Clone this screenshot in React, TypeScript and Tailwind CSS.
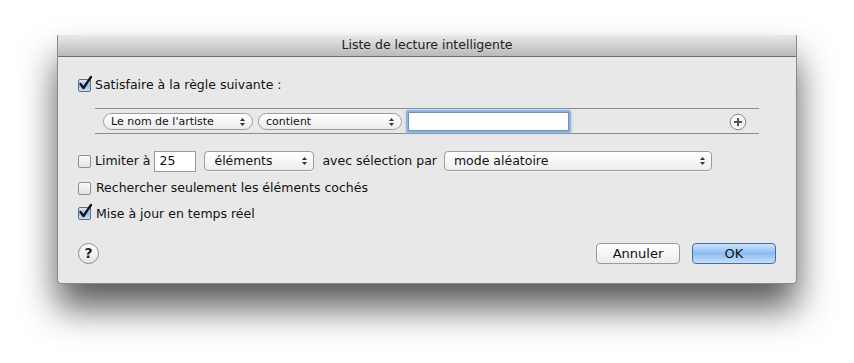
import React from "react";

const font = { fontFamily: '"DejaVu Sans", "Liberation Sans", sans-serif' };

const Arrows = () => (
  <svg width="7" height="10" viewBox="0 0 7 10" className="shrink-0">
    <path d="M3.5 1 L6 4 H1 Z" fill="#333" />
    <path d="M3.5 9 L6 6 H1 Z" fill="#333" />
  </svg>
);

const CheckBox = ({ checked }: { checked?: boolean }) => (
  <div className="relative w-[13px] h-[13px] shrink-0">
    <div
      className={`w-[13px] h-[13px] rounded-[2px] border ${
        checked
          ? "border-[#5a6f8c] bg-gradient-to-b from-[#d7e6f7] via-[#9dc0ea] to-[#c9def5]"
          : "border-[#8e8e8e] bg-gradient-to-b from-[#fafafa] to-[#e3e3e3]"
      }`}
    />
    {checked && (
      <svg
        width="16"
        height="16"
        viewBox="0 0 16 16"
        className="absolute -top-[4px] left-0"
      >
        <path
          d="M2.5 9 L5.5 13 L13 2"
          fill="none"
          stroke="#111"
          strokeWidth="2.3"
          strokeLinecap="round"
          strokeLinejoin="round"
        />
      </svg>
    )}
  </div>
);

const Popup = ({ label, w }: { label: string; w: string }) => (
  <div
    className={`${w} h-[20px] flex items-center justify-between pl-[9px] pr-[5px] rounded-[4px] border border-[#9d9d9d] bg-gradient-to-b from-white to-[#eeeeee] shadow-[0_1px_0_rgba(255,255,255,0.6)] text-[12.5px] text-[#111]`}
  >
    <span>{label}</span>
    <Arrows />
  </div>
);

const SmallPopup = ({ label, w }: { label: string; w: string }) => (
  <div
    className={`${w} h-[17px] flex items-center justify-between pl-[7px] pr-[6px] rounded-full border border-[#9d9d9d] bg-gradient-to-b from-white to-[#ececec] text-[11px] text-[#111]`}
  >
    <span>{label}</span>
    <Arrows />
  </div>
);

const App = () => {
  return (
    <div className="w-[854px] h-[363px] bg-white overflow-hidden pl-[57px] pt-[35px]" style={font}>
      <div className="w-[740px] h-[249px] flex flex-col bg-[#e8e8e8] border-x border-b border-[#8a8a8a] rounded-b-[4px] shadow-[0_24px_36px_rgba(0,0,0,0.65)]">
        <div className="h-[22px] shrink-0 flex items-center justify-center border-b border-[#6e6e6e] bg-gradient-to-b from-[#e9e9e9] to-[#b9b9b9] text-[12.5px] text-[#222]">
          Liste de lecture intelligente
        </div>

        <div className="flex-1 flex flex-col px-[20px] text-[12.5px] text-[#111]">
          <div className="mt-[19px] flex items-center gap-[4px]">
            <CheckBox checked />
            <span>Satisfaire à la règle suivante :</span>
          </div>

          <div className="mt-[13px] ml-[17px] mr-[17px] h-[26px] flex items-center gap-[5px] pl-[8px] pr-[12px] pt-[2px] border-y border-[#8c8c8c]">
            <SmallPopup label="Le nom de l'artiste" w="w-[150px]" />
            <SmallPopup label="contient" w="w-[144px]" />
            <div className="ml-[1px] w-[161px] h-[19px] bg-white border border-[#6d8fb8] rounded-[1px] shadow-[0_0_0_2px_#8fb4e0,0_0_3px_2px_#9fc1ea]" />
            <div className="flex-1" />
            <svg width="18" height="18" viewBox="0 0 18 18">
              <circle cx="9" cy="9" r="7.8" fill="#f4f4f4" stroke="#8a8a8a" strokeWidth="1" />
              <path d="M9 5 V13 M5 9 H13" stroke="#555" strokeWidth="2" />
            </svg>
          </div>

          <div className="mt-[17px] flex items-center">
            <CheckBox />
            <span className="ml-[4px]">Limiter à</span>
            <div className="ml-[4px] w-[42px] h-[21px] bg-white border border-[#9a9a9a] flex items-center pl-[4px]">
              25
            </div>
            <div className="ml-[8px]">
              <Popup label="éléments" w="w-[110px]" />
            </div>
            <span className="ml-[8px]">avec sélection par</span>
            <div className="ml-[7px]">
              <Popup label="mode aléatoire" w="w-[268px]" />
            </div>
          </div>

          <div className="mt-[7px] flex items-center gap-[5px]">
            <CheckBox />
            <span>Rechercher seulement les éléments cochés</span>
          </div>

          <div className="mt-[7px] flex items-center gap-[5px]">
            <CheckBox checked />
            <span>Mise à jour en temps réel</span>
          </div>

          <div className="mt-[20px] flex items-center">
            <div className="w-[21px] h-[21px] rounded-full border border-[#8a8a8a] bg-gradient-to-b from-white to-[#e6e6e6] flex items-center justify-center text-[14px] font-bold text-[#222]">
              ?
            </div>
            <div className="flex-1" />
            <div className="w-[84px] h-[21px] rounded-[4px] border border-[#999] bg-gradient-to-b from-white to-[#ececec] flex items-center justify-center text-[13px]">
              Annuler
            </div>
            <div className="ml-[12px] w-[84px] h-[21px] rounded-[4px] border border-[#4d6d9a] bg-gradient-to-b from-[#cfe3fb] via-[#8dbcf2] to-[#c4e0fd] flex items-center justify-center text-[13px]">
              OK
            </div>
          </div>
        </div>
      </div>
    </div>
  );
};

export default App;
